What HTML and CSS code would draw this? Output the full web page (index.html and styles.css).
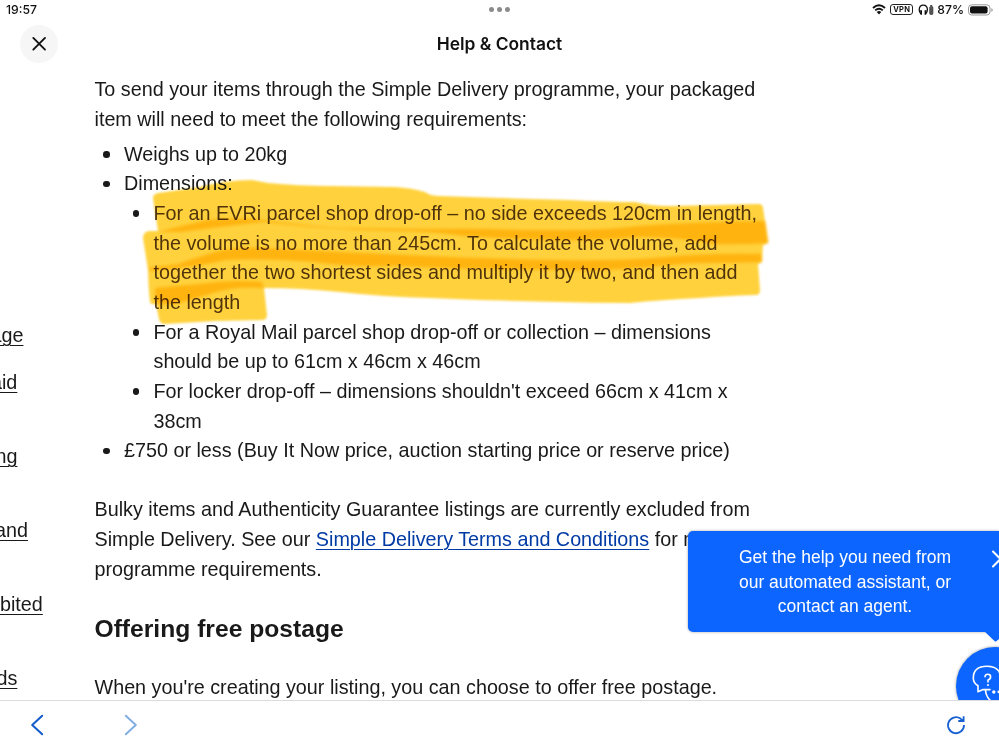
FILE: index.html
```html
<!DOCTYPE html>
<html lang="en">
<head>
<meta charset="utf-8">
<title>Help &amp; Contact</title>
<link rel="stylesheet" href="styles.css">
</head>
<body>
<div class="screen">
  <div class="status">
    <span class="time">19:57</span>
    <span class="dots"><i></i><i></i><i></i></span>
    <span class="system">
      <svg class="wifi" width="14" height="11" viewBox="0 0 14 11"><path d="M1 4Q7-1.6 13 4M3.2 6.4Q7 3 10.8 6.4" fill="none" stroke="#111" stroke-width="1.9"/><path d="M4.7 8Q7 6.2 9.3 8L7 10.5Z" fill="#111"/></svg>
      <span class="vpn">VPN</span>
      <svg class="phones" width="17" height="12" viewBox="0 0 17 12"><path d="M3 10Q1.2 8.2 1.2 5.5Q1.5 1.2 5.3 1.2T9.4 5.5Q9.4 8.2 7.6 10" fill="none" stroke="#111" stroke-width="1.3"/><path d="M2 6.2h2v4.6H2.6zM8.6 6.2h-2v4.6H8z" fill="#111"/><path d="M12.2 1h2v1h-2z" fill="#444"/><rect x="11.7" y="2.5" width="3.2" height="8" rx="1" fill="#555" stroke="#333" stroke-width=".7"/></svg>
      <span class="percent">87%</span>
      <svg class="battery" width="26" height="12" viewBox="0 0 26 12"><rect x=".5" y=".8" width="21.5" height="10.2" rx="3.2" fill="none" stroke="#999"/><rect x="2" y="2.2" width="17.6" height="7.4" rx="2" fill="#111"/><path d="M23.4 4v4q1.4-.8 1.4-2t-1.4-2" fill="#999"/></svg>
    </span>
  </div>
  <header class="header">
    <button class="close" aria-label="Close"><svg width="38" height="38" viewBox="0 0 38 38"><path d="M13.3 12.9 25 24.6M25 12.9 13.3 24.6" stroke="#111" stroke-width="1.9" stroke-linecap="round"/></svg></button>
    <h1>Help &amp; Contact</h1>
  </header>
  <main class="content">
    <nav class="side">
      <a class="n1">age</a><a class="n2">aid</a><a class="n3">ng</a><a class="n4">and</a><a class="n5">bited</a><a class="n6">ds</a>
    </nav>
    <article class="article">
      <p>To send your items through the Simple Delivery programme, your packaged<br>item will need to meet the following requirements:</p>
      <ul class="outer">
        <li>Weighs up to 20kg</li>
        <li>Dimensions:
          <ul class="inner">
            <li class="marked">For an EVRi parcel shop drop-off – no side exceeds 120cm in length,<br>the volume is no more than 245cm. To calculate the volume, add<br>together the two shortest sides and multiply it by two, and then add<br>the length</li>
            <li>For a Royal Mail parcel shop drop-off or collection – dimensions<br>should be up to 61cm x 46cm x 46cm</li>
            <li>For locker drop-off – dimensions shouldn't exceed 66cm x 41cm x<br>38cm</li>
          </ul>
        </li>
        <li>£750 or less (Buy It Now price, auction starting price or reserve price)</li>
      </ul>
      <p class="bulky">Bulky items and Authenticity Guarantee listings are currently excluded from<br>Simple Delivery. See our <a class="terms">Simple Delivery Terms and Conditions</a> for more<br>programme requirements.</p>
      <h2>Offering free postage</h2>
      <p>When you're creating your listing, you can choose to offer free postage.</p>
    </article>
    <svg class="highlight" width="640" height="160" viewBox="140 172 640 160">
      <path class="ink" d="M153 198Q153 194 158 193L200 187Q225 180 252 180L268 183Q300 186 330 186L395 187Q412 188 425 192Q430 196 440 196L500 198L570 200Q610 202 635 202Q650 206 670 206Q715 205 758 204Q763 204 763 208L768 241Q768 244 763 245L762 260Q762 263 758 264L760 290Q760 295 756 295Q725 296 700 298Q660 300 630 303Q595 303 560 302L480 300L430 298Q385 297 340 292Q300 288 264 288L267 315Q267 320 262 320L215 321L165 324Q160 324 159 319L156 304L151 304Q149 303 148 270L143 238Q143 232 149 231L158 231Z"/>
      <path class="overlap" d="M158 232Q185 225 208 220Q235 217 263 220Q300 225 340 228L430 229Q480 228 520 230L570 230Q605 230 640 226Q690 222 765 221L768 243Q740 245 715 244Q680 237 640 237Q600 241 560 240Q500 239 465 236Q430 231 390 231Q330 230 263 222Q220 227 180 232Z"/>
      <path class="overlap" d="M149 268L178 264Q198 257 215 252Q235 247 265 248L340 252L430 256Q500 259 560 260Q620 261 665 257Q710 253 761 254L762 262Q730 263 700 263Q665 265 640 268Q600 271 560 270L480 269Q435 268 400 266Q345 267 315 262Q270 258 225 260Q205 265 187 267L150 271Z"/>
      <path class="overlap" d="M156 304L155 288Q175 286 200 284Q230 279 262 282L264 288Q235 286 213 293Q190 300 175 304Z"/>
    </svg>
    <div class="chat"><svg width="43" height="53" viewBox="0 0 43 53"><g fill="none" stroke="#fff" stroke-width="1.6" stroke-linecap="round" stroke-linejoin="round"><path d="M22 44.8V38.7Q17.3 36 17.3 31Q17.3 19.2 31 19.2Q43 19.2 44.5 29M22 44.8 27 42.6H34"/><path d="M29.5 43Q30 50 35 54"/><path d="M29 29.8Q29.2 27.3 31.8 27.3Q34.6 27.3 34.6 29.8T32 33V35"/></g><circle cx="32" cy="38" r="1" fill="#fff"/><circle cx="37.8" cy="45" r="1.7" fill="#fff"/><circle cx="42.8" cy="44.8" r="1.4" fill="#fff"/></svg></div>
    <aside class="bubble">
      <p>Get the help you need from<br>our automated assistant, or<br>contact an agent.</p>
      <svg class="dismiss" width="9" height="20" viewBox="0 0 9 20"><path d="M3 2.5 18 17.5M3 17.5 18 2.5" stroke="#fff" stroke-width="2" stroke-linecap="round"/></svg>
      <svg class="tail" width="16" height="13" viewBox="0 0 16 13"><path d="M1 0H16V8L13 10.5H12Z" fill="#0d65ff"/></svg>
    </aside>
  </main>
  <footer class="toolbar">
    <svg width="14" height="22" viewBox="0 0 14 22"><path d="M12.2 1.8 2.2 11 12.2 20.2" fill="none" stroke="#125bcb" stroke-width="2" stroke-linecap="round" stroke-linejoin="round"/></svg>
    <svg class="forward" width="14" height="22" viewBox="0 0 14 22"><path d="M1.8 1.8 11.8 11 1.8 20.2" fill="none" stroke="#82aee3" stroke-width="2" stroke-linecap="round" stroke-linejoin="round"/></svg>
    <svg class="reload" width="20" height="20" viewBox="0 0 20 20"><path d="M18 10A8 8 0 1 1 14.5 3.6L17 5.8M17.6 1.2V6H12.3" fill="none" stroke="#1760d2" stroke-width="1.8"/></svg>
  </footer>
</div>
</body>
</html>
```
FILE: styles.css
```css
* { box-sizing: border-box; }
body { margin: 0; background: #fff; color: #191919; font-family: "Liberation Sans", Arial, sans-serif; }
p, h1, h2, ul { margin: 0; padding: 0; }
.screen { width: 999px; height: 749px; display: flex; flex-direction: column; overflow: hidden; }
.status { height: 19px; display: grid; grid-template-columns: 1fr auto 1fr; align-items: center; font: 500 12.2px Inter, sans-serif; color: #111; }
.time { padding-left: 6px; }
.dots { display: flex; gap: 3px; }
.dots i { width: 5px; height: 5px; border-radius: 50%; background: #8b8b8b; }
.system { display: flex; justify-content: flex-end; align-items: center; padding-right: 5px; }
.vpn { width: 23px; height: 11px; margin: 0 5px 0 4px; border: 1px solid #222; border-radius: 3px; font-size: 7.5px; font-weight: 700; line-height: 9px; text-align: center; letter-spacing: .3px; }
.percent { margin: 0 4px 0 2px; }
.header { height: 51px; display: grid; grid-template-columns: 38px 1fr 38px; align-items: start; padding: 6px 20px 0; }
.close { width: 38px; height: 38px; padding: 0; border: 0; border-radius: 50%; background: #f6f6f6; }
.close svg { display: block; }
h1 { font: 600 17.4px/37px Inter, sans-serif; text-align: center; color: #111; }
.content { position: relative; height: 630px; display: flex; overflow: hidden; font-size: 19.76px; line-height: 29.65px; white-space: nowrap; }
.side { width: 94.5px; flex: none; display: grid; grid-template-rows: 47px repeat(5, 74px); padding-top: 251.3px; }
.side a { text-decoration: underline; text-underline-offset: 3px; text-decoration-thickness: 1px; }
.n1 { margin-left: -9.5px; }
.n2 { margin-left: -9px; }
.n3 { margin-left: -4.5px; }
.n4 { margin-left: -5px; }
.n5 { margin-left: 0; }
.n6 { margin-left: -3.5px; }
.article { width: 670px; flex: none; padding-top: 5.3px; }
.outer { margin: 5px 0 29.6px; padding-left: 29.5px; }
.inner { padding-left: 29.5px; }
ul { list-style: none; }
li { position: relative; }
li::before { content: ""; position: absolute; left: -21px; top: 11.5px; width: 6.5px; height: 6.5px; border-radius: 50%; background: #191919; }
.marked { color: #513e25; }
.marked::before { background: #191919; }
.terms { color: #003aa5; text-decoration: underline; text-underline-offset: 3px; text-decoration-thickness: 1px; }
h2 { margin: 29px 0 27.4px; font-size: 24.65px; line-height: 32px; font-weight: 700; }
.highlight { position: absolute; left: 140px; top: 102px; mix-blend-mode: multiply; filter: blur(.8px); }
.ink { fill: #ffd23d; }
.overlap { fill: #ffb30f; filter: blur(1px); }
.bubble { position: absolute; left: 688px; top: 461px; width: 311px; height: 101px; padding: 14px 0 0; border-radius: 5px 0 0 5px; background: #0d65ff; box-shadow: 0 0 3px rgba(0, 0, 0, .35); color: #fff; }
.bubble p { width: 314px; font-size: 17.5px; line-height: 24.7px; text-align: center; }
.dismiss { position: absolute; right: 0; top: 18px; }
.tail { position: absolute; right: 0; top: 100px; }
.chat { position: absolute; left: 956px; top: 577px; width: 78px; height: 78px; border-radius: 50%; background: #0d65ff; box-shadow: 0 0 3px rgba(0, 0, 0, .4); }
.chat svg { display: block; }
.toolbar { height: 49px; display: flex; align-items: center; border-top: 1px solid #dcdcdc; padding: 0 33px 0 30px; }
.forward { margin-left: 80px; }
.reload { margin-left: auto; }
```
